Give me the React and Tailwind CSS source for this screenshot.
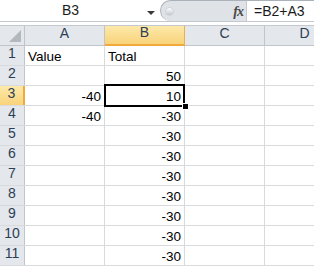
import React from 'react';

const COLS = ['A', 'B', 'C', 'D'];

// row data: [A, B] — text values left aligned, numbers right aligned
const ROWS = [
  { n: 1, a: { v: 'Value', left: true }, b: { v: 'Total', left: true } },
  { n: 2, a: null, b: { v: '50' } },
  { n: 3, a: { v: '-40' }, b: { v: '10' } },
  { n: 4, a: { v: '-40' }, b: { v: '-30' } },
  { n: 5, a: null, b: { v: '-30' } },
  { n: 6, a: null, b: { v: '-30' } },
  { n: 7, a: null, b: { v: '-30' } },
  { n: 8, a: null, b: { v: '-30' } },
  { n: 9, a: null, b: { v: '-30' } },
  { n: 10, a: null, b: { v: '-30' } },
  { n: 11, a: null, b: { v: '-30' } },
];

const Cell = ({ cell }) => (
  <div
    className={`w-[80px] shrink-0 h-full border-r border-[#d9dadb] flex items-end px-[3px] ${
      cell && !cell.left ? 'justify-end' : 'justify-start'
    }`}
  >
    {cell && <span className="leading-[17px]">{cell.v}</span>}
  </div>
);

const App = () => {
  const selRow = 3;

  return (
    <div className="w-[314px] h-[268px] overflow-hidden bg-white relative font-['Liberation_Sans',Arial,sans-serif] text-[13.5px] text-black">
      {/* Formula bar */}
      <div className="flex h-[22px] border-b border-[#c4c9cf]">
        <div className="w-[158px] shrink-0 flex items-center relative bg-white">
          <span className="w-[141px] text-center text-[14px] text-[#1b1b1b]">B3</span>
          <svg width="8" height="5" viewBox="0 0 8 5" className="absolute left-[147px] top-[11px]">
            <polygon points="0,0 8,0 4,4" fill="#3a3a3a" />
          </svg>
        </div>
        <div className="w-[86px] shrink-0 ml-[2px] flex items-center justify-between bg-[#dfe3e8] rounded-l-[11px] border border-r-0 border-b-0 border-[#aab1b9]">
          <div className="w-[9px] h-[9px] ml-[4px] rounded-full bg-gradient-to-b from-white to-[#c3c8ce] border border-[#d0d4d9]" />
          <span className="mr-[3px] font-['Liberation_Serif',serif] italic font-bold text-[14px] text-[#4a4a4a] tracking-[-1px]">fx</span>
        </div>
        <div className="flex-1 flex items-center pl-[7px] bg-white border-l border-[#c4c9cf] border-t border-t-[#aab1b9] text-[14px] text-[#1b1b1b]">
          =B2+A3
        </div>
      </div>
      <div className="h-[4px] bg-white border-b border-[#c4c9cf]" />

      {/* Column headers */}
      <div className="flex h-[20px] bg-[#e4e7eb] border-b border-[#c0c5cb] text-[#2c3e55] text-[14px]">
        <div className="w-[25px] shrink-0 border-r border-[#c0c5cb] relative">
          <svg width="12" height="12" viewBox="0 0 12 12" className="absolute right-[3px] bottom-[3px]">
            <polygon points="12,0 12,12 0,12" fill="#b3b8be" />
          </svg>
        </div>
        {COLS.map((c) => (
          <div
            key={c}
            className={`w-[80px] shrink-0 flex items-end pb-[1px] justify-center border-r ${
              c === 'B'
                ? 'bg-gradient-to-b from-[#fde9a9] to-[#f8d37a] border-[#e8b04e] border-b-2 border-b-[#f0a93a] -mb-[1px]'
                : 'border-[#c0c5cb]'
            }`}
          >
            {c}
          </div>
        ))}
      </div>

      {/* Rows */}
      <div className="relative">
        {ROWS.map((r) => (
          <div key={r.n} className="flex h-[20px] border-b border-[#d9dadb]">
            <div
              className={`w-[25px] shrink-0 flex items-end pb-[1px] justify-center text-[14px] text-[#2c3e55] border-r ${
                r.n === selRow
                  ? 'bg-gradient-to-b from-[#fde9a9] to-[#f8d37a] border-r-2 border-r-[#f0a93a]'
                  : 'bg-[#e4e7eb] border-[#c0c5cb]'
              }`}
            >
              {r.n}
            </div>
            <Cell cell={r.a} />
            <Cell cell={r.b} />
            <Cell cell={null} />
            <Cell cell={null} />
          </div>
        ))}

        {/* Active cell B3 */}
        <div className="absolute left-[104px] top-[38px] w-[81px] h-[23px] border-2 border-black pointer-events-none" />
        <div className="absolute left-[182px] top-[57px] w-[7px] h-[7px] bg-black border border-white pointer-events-none" />
      </div>
    </div>
  );
};

export default App;
